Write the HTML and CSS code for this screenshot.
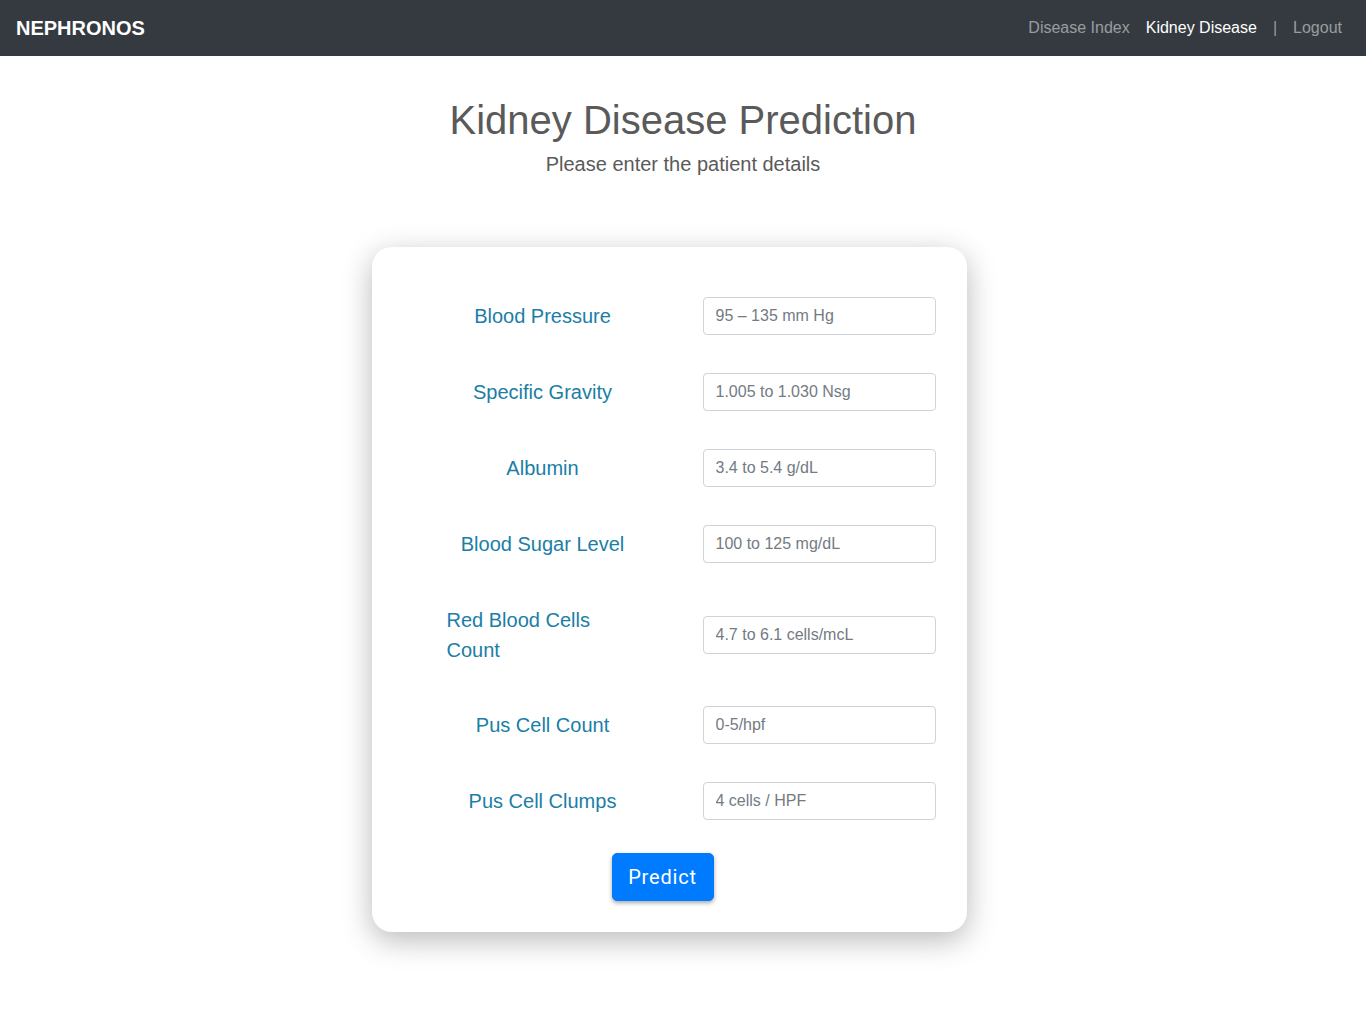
FILE: index.html
```html
<!DOCTYPE html>
<html lang="en">
<head>
<meta charset="utf-8">
<title>Kidney Disease Prediction</title>
<link rel="stylesheet" href="styles.css">
</head>
<body>
<nav class="navbar">
  <a class="brand" href="#">NEPHRONOS</a>
  <ul class="nav">
    <li><a class="nav-link" href="#">Disease Index</a></li>
    <li><a class="nav-link active" href="#">Kidney Disease</a></li>
    <li><span class="nav-link">|</span></li>
    <li><a class="nav-link" href="#">Logout</a></li>
  </ul>
</nav>
<main class="main">
  <h1 class="title">Kidney Disease Prediction</h1>
  <p class="lead">Please enter the patient details</p>
  <form class="card">
    <div class="row"><div class="label-col"><label class="label">Blood Pressure</label></div><input class="input" placeholder="95 – 135 mm Hg"></div>
    <div class="row"><div class="label-col"><label class="label">Specific Gravity</label></div><input class="input" placeholder="1.005 to 1.030 Nsg"></div>
    <div class="row"><div class="label-col"><label class="label">Albumin</label></div><input class="input" placeholder="3.4 to 5.4 g/dL"></div>
    <div class="row"><div class="label-col"><label class="label">Blood Sugar Level</label></div><input class="input" placeholder="100 to 125 mg/dL"></div>
    <div class="row"><div class="label-col"><label class="label">Red Blood Cells Count</label></div><input class="input" placeholder="4.7 to 6.1 cells/mcL"></div>
    <div class="row"><div class="label-col"><label class="label">Pus Cell Count</label></div><input class="input" placeholder="0-5/hpf"></div>
    <div class="row"><div class="label-col"><label class="label">Pus Cell Clumps</label></div><input class="input" placeholder="4 cells / HPF"></div>
    <div class="actions"><button class="btn" type="button">Predict</button></div>
  </form>
</main>
</body>
</html>
```
FILE: styles.css
```css
* { box-sizing: border-box; }
html, body { margin: 0; padding: 0; }
body {
  font-family: "Liberation Sans", Arial, sans-serif;
  background: #fff;
  color: #212529;
  font-size: 16px;
  line-height: 1.5;
}
.navbar {
  height: 56px;
  background: #343a40;
  display: flex;
  align-items: center;
  justify-content: space-between;
  padding: 0 16px;
}
.brand {
  color: #fff;
  font-weight: bold;
  font-size: 20px;
  text-decoration: none;
  line-height: 30px;
}
.nav {
  list-style: none;
  display: flex;
  margin: 0;
  padding: 0;
}
.nav-link {
  display: block;
  padding: 8px;
  color: rgba(255,255,255,.5);
  text-decoration: none;
  font-size: 16px;
  line-height: 24px;
}
.nav-link.active { color: #fff; }
.main {
  display: flex;
  flex-direction: column;
  align-items: center;
}
.title {
  margin: 40px 0 0;
  font-size: 40px;
  font-weight: normal;
  line-height: 48px;
  color: #5a5a5a;
}
.lead {
  margin: 5px 0 0;
  font-size: 20px;
  line-height: 30px;
  color: #5a5a5a;
}
.card {
  margin: 68px 28px 80px 0;
  width: 595px;
  background: #fff;
  border-radius: 20px;
  box-shadow: 0 8px 30px rgba(0,0,0,.28);
  padding: 50px 31px 31px 31px;
  display: flex;
  flex-direction: column;
  gap: 38px;
}
.row {
  display: flex;
  align-items: center;
  gap: 20px;
  min-height: 38px;
}
.label-col {
  width: 280px;
  display: flex;
  justify-content: center;
}
.label {
  display: inline-block;
  max-width: 192px;
  text-align: left;
  font-size: 20px;
  line-height: 30px;
  padding: 3.5px 0;
  color: #1a7ea6;
}
.input {
  width: 233px;
  height: 38px;
  padding: 6px 12px;
  border: 1px solid #ced4da;
  border-radius: 4px;
  font-family: "Liberation Sans", Arial, sans-serif;
  font-size: 16px;
  color: #495057;
  background: #fff;
}
.input::placeholder { color: #737b83; opacity: 1; }
.actions {
  display: flex;
  justify-content: center;
  margin-top: -5px;
}
.btn {
  height: 48px;
  width: 102px;
  margin-left: -13px;
  background: #007bff;
  color: #fff;
  border: 1px solid #007bff;
  border-radius: 5px;
  font-family: Roboto, "Liberation Sans", sans-serif;
  font-size: 20px;
  letter-spacing: 0.8px;
  box-shadow: 0 2px 4px rgba(0,0,0,.35);
  cursor: pointer;
}
```
